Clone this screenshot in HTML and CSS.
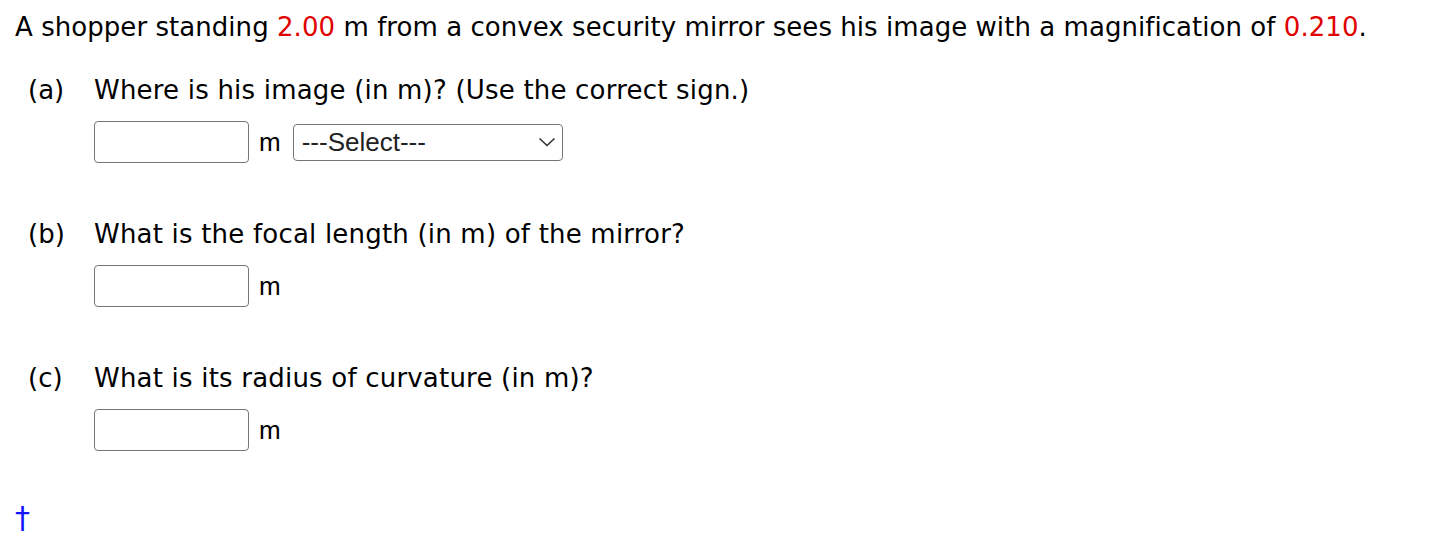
FILE: index.html
```html
<!DOCTYPE html>
<html>
<head>
<meta charset="utf-8">
<link rel="stylesheet" href="styles.css">
</head>
<body>
<div class="page">
  <p class="intro">A shopper standing <span class="red">2.00</span> m from a convex security mirror sees his image with a magnification of <span class="red">0.210</span>.</p>

  <div class="part">
    <div class="q"><span class="lbl">(a)</span><span class="qt">Where is his image (in m)? (Use the correct sign.)</span></div>
    <div class="ans">
      <input class="box" type="text">
      <span class="unit">m</span>
      <div class="sel"><span>---Select---</span>
        <svg class="chev" width="18" height="10" viewBox="0 0 18 10"><path d="M1.5 1.5 L9 8.5 L16.5 1.5" fill="none" stroke="#333" stroke-width="1.6"/></svg>
      </div>
    </div>
  </div>

  <div class="part">
    <div class="q"><span class="lbl">(b)</span><span class="qt">What is the focal length (in m) of the mirror?</span></div>
    <div class="ans">
      <input class="box" type="text">
      <span class="unit">m</span>
    </div>
  </div>

  <div class="part">
    <div class="q"><span class="lbl">(c)</span><span class="qt">What is its radius of curvature (in m)?</span></div>
    <div class="ans">
      <input class="box" type="text">
      <span class="unit">m</span>
    </div>
  </div>

  <div class="dagger">&dagger;</div>
</div>
</body>
</html>
```

FILE: styles.css
```css
html, body {
  margin: 0;
  padding: 0;
  background: #fff;
}
.page {
  padding: 10px 0 0 15px;
  font-family: "DejaVu Sans", Verdana, sans-serif;
  font-size: 26px;
  color: #000;
}
.intro {
  margin: 0;
  line-height: 34px;
  letter-spacing: 0.05px;
}
.red {
  color: #e00000;
}
.part {
  padding-left: 13px;
  margin-top: 29px;
}
.part + .part {
  margin-top: 54px;
}
.q {
  display: flex;
  line-height: 34px;
}
.lbl {
  width: 66px;
}
.qt {
  letter-spacing: 0.2px;
}
.ans {
  display: flex;
  align-items: center;
  margin-top: 14px;
  padding-left: 66px;
  height: 42px;
}
.box {
  box-sizing: border-box;
  width: 155px;
  height: 42px;
  border: 1px solid #767676;
  border-radius: 4px;
  margin: 0;
  padding: 0;
  background: #fff;
}
.unit {
  margin-left: 10px;
  font-family: "Liberation Sans", Arial, sans-serif;
  font-size: 26px;
}
.sel {
  box-sizing: border-box;
  margin-left: 12px;
  width: 270px;
  height: 37px;
  border: 1px solid #767676;
  border-radius: 4px;
  display: flex;
  align-items: center;
  justify-content: space-between;
  padding: 0 6px 0 8px;
  font-family: "Liberation Sans", Arial, sans-serif;
  font-size: 26px;
  color: #222;
}
.chev {
  display: block;
}
.dagger {
  margin-top: 50px;
  color: #1414ff;
  font-size: 30px;
  line-height: 34px;
}
```
